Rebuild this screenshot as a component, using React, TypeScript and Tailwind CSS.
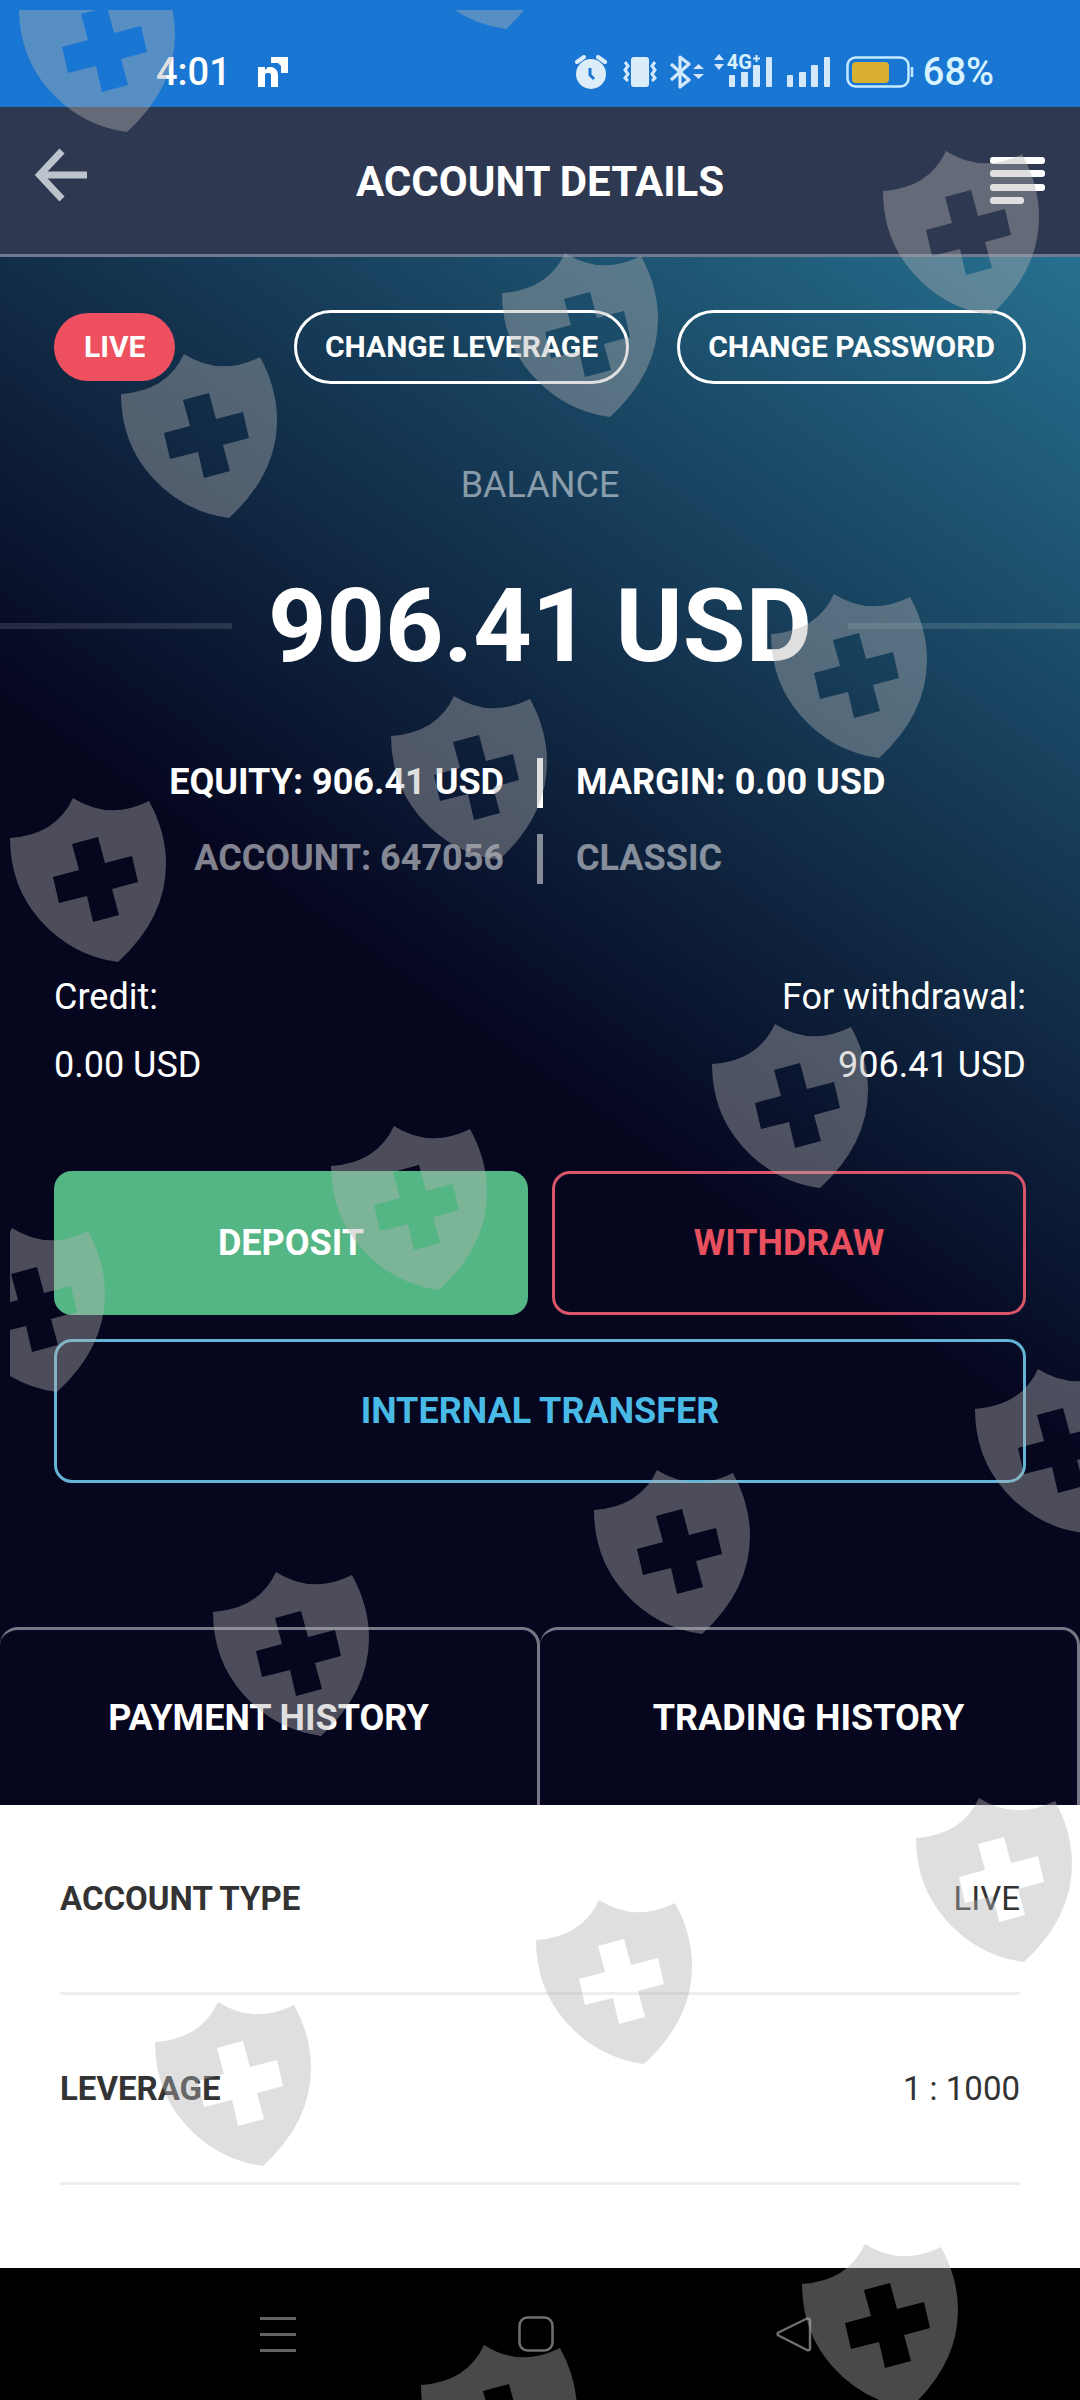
import React from 'react'

interface Detail {
  label: string
  value: string
}

const details: Detail[] = [
  { label: 'ACCOUNT TYPE', value: 'LIVE' },
  { label: 'LEVERAGE', value: '1 : 1000' },
]

// top left corner of every shield, relative to the overlay
const shields = [
  [9, -42],
  [388, -145],
  [873, 141],
  [492, 243],
  [111, 344],
  [761, 584],
  [381, 686],
  [0, 788],
  [702, 1014],
  [321, 1116],
  [-61, 1218],
  [965, 1359],
  [584, 1460],
  [203, 1562],
  [906, 1788],
  [526, 1890],
  [145, 1992],
  [792, 2234],
  [411, 2335],
]

const ShieldOverlay: React.FC = () => (
  <div className="pointer-events-none absolute top-2.5 right-0 bottom-0 left-2.5">
    <svg className="h-full w-full overflow-hidden" aria-hidden="true">
      <defs>
        <path
          id="shield"
          fillRule="evenodd"
          d="M0 40Q46 37 63 0Q99 23 139 3Q156 34 156 66Q156 120 108 164Q62 158 30 122Q0 88 0 40ZM62 46L88 39L95 65L122 58L128 84L102 91L109 117L83 124L77 98L49 105L43 79L69 72Z"
        />
      </defs>
      <g fill="#b2b2b2" fillOpacity="0.41">
        {shields.map(([x, y]) => (
          <use key={`${x}:${y}`} href="#shield" x={x} y={y} />
        ))}
      </g>
    </svg>
  </div>
)

const SignalBars: React.FC = () => (
  <svg width="44" height="32" viewBox="0 0 44 32" fill="#d3e9fb">
    <rect x="0" y="19" width="6" height="12" rx="1" />
    <rect x="12" y="16" width="7" height="15" rx="1" />
    <rect x="24" y="9" width="7" height="22" rx="1" />
    <rect x="37" y="1" width="6" height="30" rx="1" />
  </svg>
)

const StatusBar: React.FC = () => (
  <div className="flex h-[107px] items-center justify-between bg-[#1976d2] pt-9 pr-[86px] pl-[156px] text-[38px] leading-none font-medium text-white">
    <div className="flex items-center gap-[26px]">
      <span>4:01</span>
      <svg width="32" height="32" viewBox="0 0 32 32" fill="white">
        <path d="M1 11H8V14L11 11H15Q21 13 21 19V31H14V19Q14 17 12 17H10Q8 17 8 19V31H1Z" />
        <path d="M14 1H31V17H24V10L21 7H14Z" />
      </svg>
    </div>
    <div className="flex items-center text-[#d6f2ff]">
      <svg width="32" height="36" viewBox="0 0 32 36" fill="none">
        <circle cx="16" cy="20" r="15" fill="#dcecf8" />
        <path d="M2 8L9 3M30 8L23 3" stroke="#dcecf8" strokeWidth="4" strokeLinecap="round" />
        <path d="M15 14V21L19 25" stroke="#1976d2" strokeWidth="3" />
      </svg>
      <svg className="ml-4" width="34" height="32" viewBox="0 0 34 32" fill="none">
        <rect x="8" y="1" width="18" height="30" rx="3" fill="#dcecf8" />
        <path
          d="M2 6L5 10L2 14L5 18L2 22L5 25M32 6L29 10L32 14L29 18L32 22L29 25"
          stroke="#d3e9fb"
          strokeWidth="3"
        />
      </svg>
      <svg className="ml-3" width="36" height="34" viewBox="0 0 36 34" fill="none">
        <path
          d="M2 9L20 25L11 32V2L20 9L2 25"
          stroke="#d3e9fb"
          strokeWidth="3.2"
          strokeLinejoin="round"
        />
        <path d="M24 14L29.500 9L35 14ZM24 19H35L29.500 24Z" fill="#d3e9fb" />
      </svg>
      <div className="relative ml-6">
        <SignalBars />
        <div className="absolute -top-0.5 -left-4 flex items-start gap-0.5">
          <svg width="12" height="16" viewBox="0 0 12 16" fill="#d3e9fb">
            <path d="M1 6L6 0L11 6ZM1 10H11L6 16Z" />
          </svg>
          <span className="text-[20px] leading-4 font-bold">4G</span>
          <svg className="-ml-0.5" width="9" height="9" viewBox="0 0 9 9" stroke="#d3e9fb" strokeWidth="2">
            <path d="M4.500 1V8M1 4.500H8" />
          </svg>
        </div>
      </div>
      <div className="ml-3.5">
        <SignalBars />
      </div>
      <svg className="ml-3.5" width="70" height="32" viewBox="0 0 70 32" fill="none">
        <rect x="2.500" y="1.500" width="61" height="29" rx="8" stroke="#c4ebff" strokeWidth="2.500" />
        <rect x="7" y="6" width="37" height="21" rx="4" fill="#d9af31" />
        <path d="M67 11V21" stroke="#c4ebff" strokeWidth="2.500" />
      </svg>
      <span className="ml-2">68%</span>
    </div>
  </div>
)

const Header: React.FC = () => (
  <header className="grid h-[150px] grid-cols-[1fr_auto_1fr] items-center border-b-3 border-[#6f7a90] bg-[#2e3951] px-[35px]">
    <button type="button" aria-label="Back" className="justify-self-start pb-3">
      <svg width="54" height="54" viewBox="0 0 54 54" fill="none" stroke="#bcc3cc" strokeWidth="7">
        <path d="M27 3L4.500 27L27 51M5 27H52" />
      </svg>
    </button>
    <h1 className="pt-0.5 text-[42px] leading-none font-bold text-white">ACCOUNT DETAILS</h1>
    <button type="button" aria-label="Menu" className="justify-self-end">
      <svg width="55" height="48" viewBox="0 0 55 48" fill="white">
        <rect y="0" width="55" height="7" rx="3" />
        <rect y="13" width="55" height="7" rx="3" />
        <rect y="27" width="55" height="7" rx="3" />
        <rect y="40" width="34" height="7" rx="3" />
      </svg>
    </button>
  </header>
)

const Summary: React.FC = () => (
  <section className="bg-[linear-gradient(35deg,#06061f_48%,#26708f_100%)] pt-[53px] text-[36px] text-white">
    <div className="flex h-[74px] items-center px-[54px] text-[30px] leading-none font-bold">
      <span className="flex h-[68px] items-center rounded-full bg-[#ee5060] px-[30px]">LIVE</span>
      <button
        type="button"
        className="ml-auto h-full rounded-full border-3 border-white px-7"
      >
        CHANGE LEVERAGE
      </button>
      <button type="button" className="ml-12 h-full rounded-full border-3 border-white px-7">
        CHANGE PASSWORD
      </button>
    </div>

    <p className="mt-20 text-center leading-[42px] text-white/50">BALANCE</p>
    <div className="mt-15 flex items-center gap-9">
      <div className="h-1.5 flex-1 bg-white/12" />
      <p className="text-[102px] leading-[120px] font-bold">906.41 USD</p>
      <div className="h-1.5 flex-1 bg-white/12" />
    </div>

    <div className="mt-[72px] flex flex-col gap-[26px] leading-[48px] font-bold">
      <div className="grid h-[50px] grid-cols-[1fr_6px_1fr] gap-x-[33px]">
        <span className="text-right">EQUITY: 906.41 USD</span>
        <div className="h-full bg-white" />
        <span>MARGIN: 0.00 USD</span>
      </div>
      <div className="grid h-[50px] grid-cols-[1fr_6px_1fr] gap-x-[33px] text-white/50">
        <span className="text-right">ACCOUNT: 647056</span>
        <div className="h-full bg-white/50" />
        <span>CLASSIC</span>
      </div>
    </div>

    <div className="mt-[79px] flex justify-between px-[54px] leading-[68px]">
      <div>
        <p>Credit:</p>
        <p>0.00 USD</p>
      </div>
      <div className="text-right">
        <p>For withdrawal:</p>
        <p>906.41 USD</p>
      </div>
    </div>

    <div className="mt-[72px] grid grid-cols-2 gap-6 px-[54px] font-bold">
      <button type="button" className="h-36 rounded-[18px] bg-[#55b685]">
        DEPOSIT
      </button>
      <button
        type="button"
        className="h-36 rounded-[18px] border-3 border-[#d9566a] text-[#e8505f]"
      >
        WITHDRAW
      </button>
      <button
        type="button"
        className="col-span-2 h-36 rounded-[18px] border-3 border-[#63b4d6] text-[#49b9e6]"
      >
        INTERNAL TRANSFER
      </button>
    </div>

    <div className="mt-36 grid grid-cols-2 font-bold">
      <button type="button" className="h-[178px] rounded-t-[18px] border-t-3 border-r-3 border-white/45">
        PAYMENT HISTORY
      </button>
      <button type="button" className="h-[178px] rounded-t-[18px] border-t-3 border-r-3 border-white/45">
        TRADING HISTORY
      </button>
    </div>
  </section>
)

const NavigationBar: React.FC = () => (
  <nav className="flex h-[132px] items-center justify-center gap-[222px] bg-black pr-2">
    <button type="button" aria-label="Recent apps">
      <svg width="36" height="36" viewBox="0 0 36 36" stroke="#636363" strokeWidth="3">
        <path d="M0 2.500H36M0 18.500H36M0 34.500H36" />
      </svg>
    </button>
    <button type="button" aria-label="Home">
      <svg width="36" height="36" viewBox="0 0 36 36" fill="none" stroke="#707070" strokeWidth="2.500">
        <rect x="1.500" y="1.500" width="33" height="33" rx="8" />
      </svg>
    </button>
    <button type="button" aria-label="Back">
      <svg
        width="36"
        height="36"
        viewBox="0 0 36 36"
        fill="none"
        stroke="#707070"
        strokeWidth="2.500"
        strokeLinejoin="round"
      >
        <path d="M2.500 16.500L31 2.500Q34 2 34 5V32Q34 35 31 34L2.500 19.500Q0.500 18 2.500 16.500Z" />
      </svg>
    </button>
  </nav>
)

const App: React.FC = () => {
  return (
    <div className="relative flex min-h-screen flex-col overflow-hidden bg-white font-['Roboto',sans-serif]">
      <StatusBar />
      <Header />
      <main className="flex-1">
        <Summary />
        <dl className="px-[60px] pb-[83px] text-[33px] text-[#333333]">
          {details.map((item) => (
            <div
              key={item.label}
              className="flex h-[190px] items-center justify-between border-b-3 border-[#eeeeee]"
            >
              <dt className="font-bold">{item.label}</dt>
              <dd>{item.value}</dd>
            </div>
          ))}
        </dl>
      </main>
      <NavigationBar />
      <ShieldOverlay />
    </div>
  )
}

export default App
